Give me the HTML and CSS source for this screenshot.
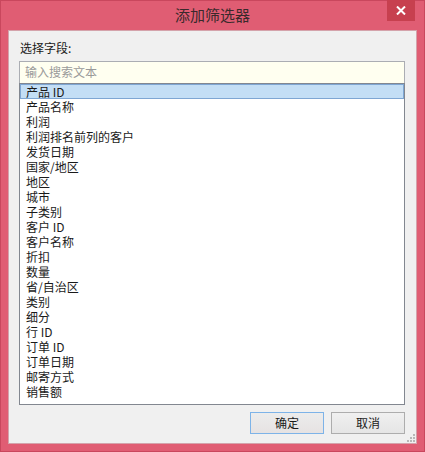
FILE: index.html
```html
<!DOCTYPE html>
<html lang="zh">
<head>
<meta charset="utf-8">
<title>添加筛选器</title>
<link rel="stylesheet" href="styles.css">
</head>
<body>
<div class="window">
  <div class="titlebar">
    <div class="title">添加筛选器</div>
    <div class="close">
      <svg width="10" height="9" viewBox="0 0 10 9"><path d="M1 0.5 L9 8.5 M9 0.5 L1 8.5" stroke="#fff" stroke-width="2"/></svg>
    </div>
  </div>
  <div class="content">
    <div class="label">选择字段:</div>
    <div class="search">输入搜索文本</div>
    <ul class="list">
      <li class="selected">产品 ID</li>
      <li>产品名称</li>
      <li>利润</li>
      <li>利润排名前列的客户</li>
      <li>发货日期</li>
      <li>国家/地区</li>
      <li>地区</li>
      <li>城市</li>
      <li>子类别</li>
      <li>客户 ID</li>
      <li>客户名称</li>
      <li>折扣</li>
      <li>数量</li>
      <li>省/自治区</li>
      <li>类别</li>
      <li>细分</li>
      <li>行 ID</li>
      <li>订单 ID</li>
      <li>订单日期</li>
      <li>邮寄方式</li>
      <li>销售额</li>
    </ul>
    <div class="buttons">
      <div class="btn default">确定</div>
      <div class="btn">取消</div>
    </div>
    <svg class="grip" width="8" height="8" viewBox="0 0 8 8">
      <rect x="6" y="0" width="2" height="2" fill="#b8b8b8"/>
      <rect x="3" y="3" width="2" height="2" fill="#b8b8b8"/>
      <rect x="6" y="3" width="2" height="2" fill="#b8b8b8"/>
      <rect x="0" y="6" width="2" height="2" fill="#b8b8b8"/>
      <rect x="3" y="6" width="2" height="2" fill="#b8b8b8"/>
      <rect x="6" y="6" width="2" height="2" fill="#b8b8b8"/>
    </svg>
  </div>
</div>
</body>
</html>
```

FILE: styles.css
```css
* { box-sizing: border-box; }
html, body {
  margin: 0;
  padding: 0;
  background: #e05d73;
}
body {
  font-family: "Noto Sans CJK SC", "DejaVu Sans", sans-serif;
  font-size: 12px;
  color: #1a1a1a;
}
.window {
  width: 425px;
  height: 452px;
  background: #e05d73;
  border: 1px solid #c9475d;
  display: flex;
  flex-direction: column;
}
.titlebar {
  height: 29px;
  position: relative;
  display: flex;
  align-items: center;
  justify-content: center;
}
.title {
  font-size: 15px;
  color: #3a2a2c;
  line-height: 20px;
  margin-top: -2px;
}
.close {
  position: absolute;
  top: -1px;
  right: 9px;
  width: 28px;
  height: 21px;
  background: #c7404f;
  display: flex;
  align-items: center;
  justify-content: center;
}
.content {
  flex: 1;
  margin: 0 7px 7px 7px;
  background: #f0f0f0;
  border: 1px solid #d4a3ab;
  padding: 9px 11px 0 10px;
  display: flex;
  flex-direction: column;
  position: relative;
}
.label {
  height: 15px;
  line-height: 15px;
  padding-left: 1px;
}
.search {
  margin-top: 6px;
  height: 22px;
  border: 1px solid #abadb3;
  border-bottom: none;
  background: #fffff0;
  color: #9a9a9a;
  line-height: 20px;
  padding-left: 5px;
}
.list {
  list-style: none;
  margin: 0;
  height: 322px;
  border: 1px solid #828790;
  background: #fff;
  padding: 0;
}
.list li {
  height: 15px;
  line-height: 15px;
  padding-left: 6px;
  white-space: nowrap;
}
.list li.selected {
  background: #c3def5;
  border: 1px solid #7ea6d3;
  line-height: 13px;
  padding-left: 5px;
}
.buttons {
  display: flex;
  justify-content: flex-end;
  gap: 7px;
  margin-top: 7px;
}
.btn {
  width: 74px;
  height: 22px;
  border: 1px solid #adadad;
  background: linear-gradient(#f0f0f0, #e5e5e5);
  text-align: center;
  line-height: 20px;
}
.btn.default {
  border-color: #7db3e8;
  background: linear-gradient(#ececec, #e6e2e2);
}
.grip {
  position: absolute;
  right: 1px;
  bottom: 1px;
}
```
